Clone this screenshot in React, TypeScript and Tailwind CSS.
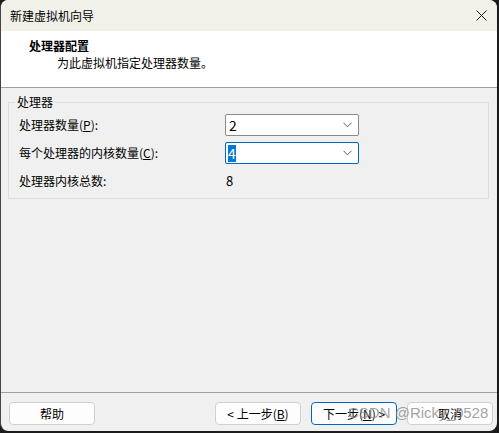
import React from "react";

const font = { fontFamily: '"Noto Sans CJK SC", "Liberation Sans", sans-serif' };

function Chevron() {
  return (
    <svg width="9" height="6" viewBox="0 0 9 6" className="shrink-0">
      <path d="M0.5 0.8 L4.5 4.8 L8.5 0.8" fill="none" stroke="#5a5a5a" strokeWidth="1" />
    </svg>
  );
}

function Combo({ value, active }: { value: string; active?: boolean }) {
  return (
    <div
      className={`w-[134px] h-[22px] flex items-center justify-between pl-[2px] pr-[6px] bg-white border ${
        active ? "border-[#0067c0]" : "border-[#8a8a8a]"
      } rounded-[2px]`}
    >
      {active ? (
        <span className="bg-[#0078d7] text-white leading-[17px] text-[14px]">{value}</span>
      ) : (
        <span className="text-[14px] leading-[17px] text-black pl-[1px]">{value}</span>
      )}
      <Chevron />
    </div>
  );
}

function Btn({ children, primary }: { children: React.ReactNode; primary?: boolean }) {
  return (
    <button
      className={`w-[86px] h-[23px] rounded-[4px] text-[12px] text-black flex items-center justify-center ${
        primary ? "border border-[#0067c0] bg-[#fdfdfd]" : "border border-[#d0d0d0] bg-[#fdfdfd]"
      }`}
    >
      {children}
    </button>
  );
}

export default function App() {
  return (
    <div className="w-[499px] h-[433px] bg-[#1c1c1c] overflow-hidden" style={font}>
      <div className="relative w-[497px] h-[431px] rounded-[8px] overflow-hidden flex flex-col bg-[#f0f0f0] border-l border-[#444]">
        {/* title bar */}
        <div className="h-[31px] shrink-0 flex items-center justify-between pl-[9px] pr-[10px] bg-[#f1f1ea]">
          <span className="text-[12px] text-black">新建虚拟机向导</span>
          <svg width="11" height="11" viewBox="0 0 11 11">
            <path d="M0.5 0.5 L10.5 10.5 M10.5 0.5 L0.5 10.5" stroke="#1a1a1a" strokeWidth="1" />
          </svg>
        </div>

        {/* header */}
        <div className="h-[56px] shrink-0 bg-white flex flex-col pl-[28px] pt-[6px]">
          <span className="text-[12px] font-bold text-black leading-[18px]">处理器配置</span>
          <span className="text-[12px] text-black leading-[16px] pl-[28px]">为此虚拟机指定处理器数量。</span>
        </div>
        <div className="h-px shrink-0 bg-[#a0a0a0]" />

        {/* body */}
        <div className="flex-1 pl-[7px] pr-[7px] pt-[14px]">
          <div className="relative w-[481px] h-[97px] border border-[#dcdcdc] pl-[10px] pt-[11px] flex flex-col">
            <span className="absolute left-[6px] top-[-9px] px-[2px] bg-[#f0f0f0] text-[12px] leading-[16px] text-black">
              处理器
            </span>
            <div className="flex items-center h-[22px]">
              <span className="w-[206px] text-[12px] text-black">
                处理器数量(<span className="underline">P</span>):
              </span>
              <Combo value="2" />
            </div>
            <div className="flex items-center h-[22px] mt-[6px]">
              <span className="w-[206px] text-[12px] text-black">
                每个处理器的内核数量(<span className="underline">C</span>):
              </span>
              <Combo value="4" active />
            </div>
            <div className="flex items-center h-[18px] mt-[8px]">
              <span className="w-[207px] text-[12px] text-black">处理器内核总数:</span>
              <span className="text-[13px] text-black">8</span>
            </div>
          </div>
        </div>

        {/* footer */}
        <div className="h-px shrink-0 bg-[#a0a0a0]" />
        <div className="h-[38px] shrink-0 flex items-start pt-[9px] pl-[8px]">
          <Btn>帮助</Btn>
          <div className="ml-[120px] flex gap-[10px]">
            <Btn>
              &lt; 上一步(<span className="underline">B</span>)
            </Btn>
            <Btn primary>
              下一步(<span className="underline">N</span>) &gt;
            </Btn>
            <Btn>取消</Btn>
          </div>
        </div>

        {/* watermark */}
        <span
          className="absolute z-10 left-[347px] top-[403px] text-[15px] leading-[20px] text-[#8c8c8c]/80 whitespace-nowrap pointer-events-none"
          style={{ fontFamily: '"Liberation Sans", sans-serif' }}
        >
          CSDN @Ricky_0528
        </span>
      </div>
    </div>
  );
}
